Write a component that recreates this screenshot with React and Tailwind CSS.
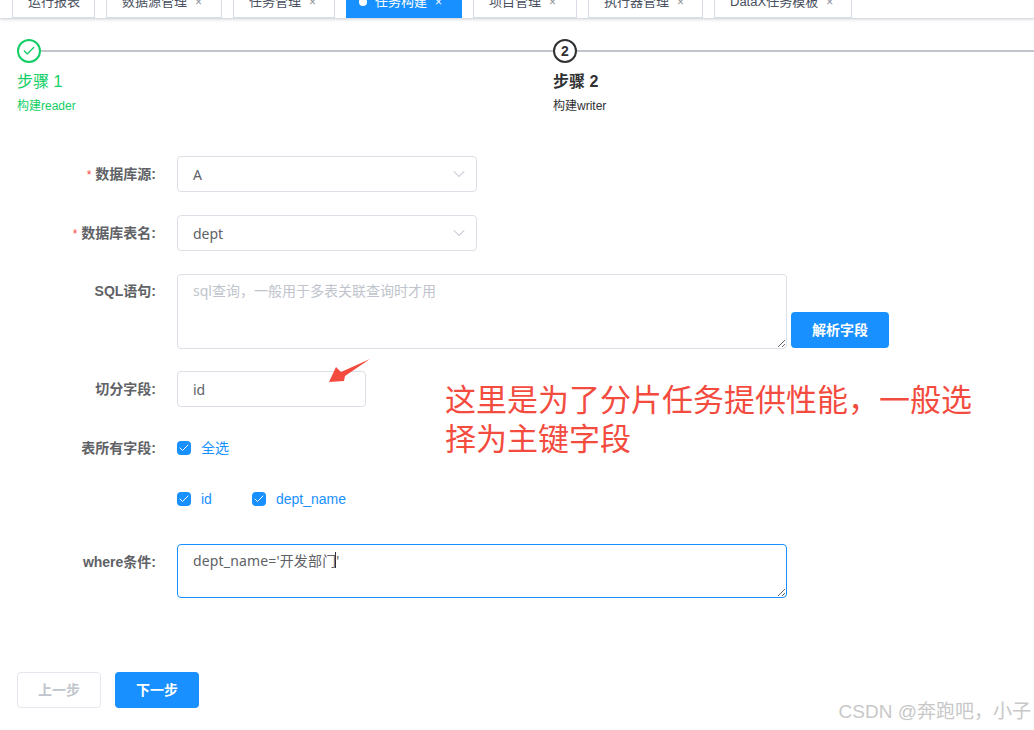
import React from "react";
import { ChevronDown, Check } from "lucide-react";

const tabs = [
  { name: "运行报表", w: "w-[83px]", closable: false },
  { name: "数据源管理", w: "w-[116px]", closable: true },
  { name: "任务管理", w: "w-[102px]", closable: true },
  { name: "任务构建", w: "w-[116px]", closable: true, active: true },
  { name: "项目管理", w: "w-[104px]", closable: true },
  { name: "执行器管理", w: "w-[115px]", closable: true },
  { name: "DataX任务模板", w: "w-[138px]", closable: true },
];

const sans = "font-['Noto_Sans','Noto_Sans_CJK_SC',sans-serif]";
const arial = "font-['Liberation_Sans','Noto_Sans_CJK_SC',sans-serif]";

function Label({ required, children }) {
  return (
    <div className={`w-[177px] shrink-0 pr-[21px] text-right text-sm font-bold text-[#606266] ${arial}`}>
      {required && <span className="mr-1 text-xs font-normal text-[#ff4949]">*</span>}
      {children}
    </div>
  );
}

function SelectBox({ value }) {
  return (
    <div className="flex h-9 w-[300px] items-center justify-between rounded border border-[#dcdfe6] pl-[15px] pr-[7px]">
      <span className={`pt-px text-sm text-[#606266] ${sans}`}>{value}</span>
      <ChevronDown className="h-5 w-5 text-[#c0c4cc]" strokeWidth={1.25} />
    </div>
  );
}

function CheckItem({ label, className }) {
  return (
    <div className={`flex items-center ${className || ""}`}>
      <span className="flex h-3.5 w-3.5 items-center justify-center rounded-sm bg-[#1890ff]">
        <Check className="h-3 w-3 text-white" strokeWidth={2} />
      </span>
      <span className={`ml-2.5 text-sm text-[#1890ff] ${arial}`}>{label}</span>
    </div>
  );
}

export default function App() {
  return (
    <div className={`relative h-[730px] w-[1034px] overflow-hidden bg-white ${arial}`}>
      {/* Tabs, cut off at the top of the shot */}
      <div className="flex h-[19px] items-end gap-[11px] overflow-hidden border-b border-[#d8dce5] pl-3 shadow-[0_1px_3px_rgba(0,0,0,0.12)]">
        {tabs.map((tab) => (
          <div
            key={tab.name}
            className={`flex h-8 shrink-0 items-center gap-2 border text-[13px] ${tab.w} ${
              tab.active
                ? "border-[#1890ff] bg-[#1890ff] pl-3 text-white"
                : "border-[#d8dce5] bg-white pl-[15px] text-[#495060]"
            }`}
          >
            {tab.active && <span className="h-2 w-2 rounded-full bg-white" />}
            <span>{tab.name}</span>
            {tab.closable && (
              <span className={`text-xs ${tab.active ? "text-white" : "text-[#8a8f99]"}`}>×</span>
            )}
          </div>
        ))}
      </div>

      {/* Steps */}
      <div className="mt-[20px] flex pl-[17px]">
        <div className="w-[536px] shrink-0">
          <div className="flex items-center">
            <span className="flex h-6 w-6 shrink-0 items-center justify-center rounded-full border-2 border-[#13ce66]">
              <Check className="h-3.5 w-3.5 text-[#13ce66]" strokeWidth={2.25} />
            </span>
            <div className="h-0.5 flex-1 bg-[#c0c4cc]" />
          </div>
          <div className="mt-[8px] text-base leading-[21px] text-[#13ce66]">步骤 1</div>
          <div className="mt-[4px] text-xs leading-5 text-[#13ce66]">构建reader</div>
        </div>
        <div className="flex-1">
          <div className="flex items-center">
            <span className="flex h-6 w-6 shrink-0 items-center justify-center rounded-full border-2 border-[#303133] text-sm font-bold text-[#303133]">
              2
            </span>
            <div className="h-0.5 flex-1 bg-[#c0c4cc]" />
          </div>
          <div className="mt-[8px] text-base font-bold leading-[21px] text-[#303133]">步骤 2</div>
          <div className="mt-[4px] text-xs leading-5 text-[#303133]">构建writer</div>
        </div>
      </div>

      {/* Form */}
      <div className="mt-[40px]">
        <div className="flex items-center">
          <Label required>数据库源:</Label>
          <SelectBox value="A" />
        </div>
        <div className="mt-[23px] flex items-center">
          <Label required>数据库表名:</Label>
          <SelectBox value="dept" />
        </div>
        <div className="mt-[23px] flex items-start">
          <div className="pt-[7px]">
            <Label>SQL语句:</Label>
          </div>
          <textarea
            readOnly
            placeholder="sql查询，一般用于多表关联查询时才用"
            className={`block h-[75px] w-[610px] rounded border border-[#dcdfe6] px-[15px] py-[5px] text-sm leading-[21px] text-[#606266] outline-none placeholder:text-[#c0c4cc] ${sans}`}
          />
          <button className="ml-1 mt-[38px] h-9 w-[98px] rounded bg-[#1890ff] text-sm font-bold text-white">
            解析字段
          </button>
        </div>
        <div className="mt-[22px] flex items-center">
          <Label>切分字段:</Label>
          <div className={`flex h-9 w-[189px] items-center rounded border border-[#dcdfe6] px-[15px] pt-px text-sm text-[#606266] ${sans}`}>
            id
          </div>
        </div>
        <div className="mt-[31px] flex h-[20px] items-center">
          <Label>表所有字段:</Label>
          <CheckItem label="全选" />
        </div>
        <div className="mt-[31px] flex h-[20px] items-center pl-[177px]">
          <CheckItem label="id" />
          <CheckItem label="dept_name" className="ml-10" />
        </div>
        <div className="relative mt-[35px] flex items-start">
          <div className="pt-2">
            <Label>where条件:</Label>
          </div>
          <textarea
            readOnly
            defaultValue="dept_name='开发部门'"
            className={`block h-[54px] w-[610px] rounded border border-[#1890ff] px-[15px] py-[5px] text-sm leading-[21px] tracking-[0.15px] text-[#606266] outline-none ${sans}`}
          />
          {/* text caret */}
          <span className="absolute left-[335px] top-[8px] h-4 w-px bg-[#303133]" />
        </div>
      </div>

      {/* Footer buttons */}
      <div className="mt-[74px] flex gap-[14px] pl-[17px]">
        <button className="h-9 w-[84px] rounded border border-[#e4e7ed] bg-white text-sm font-bold text-[#c0c4cc]">
          上一步
        </button>
        <button className="h-9 w-[84px] rounded bg-[#1890ff] text-sm font-bold text-white">
          下一步
        </button>
      </div>

      {/* Red annotation drawn over the shot */}
      <svg className="absolute left-[325px] top-[355px]" width="50" height="32" viewBox="325 355 50 32">
        <polygon points="329,382 336,367 341,372 370,359 345,376 344,381" fill="#f44b3f" />
      </svg>
      <div className={`absolute left-[445px] top-[380px] w-[540px] text-[31px] leading-[39px] text-[#f44b3f] ${sans}`}>
        这里是为了分片任务提供性能，一般选择为主键字段
      </div>

      {/* Watermark */}
      <div className={`absolute right-[3px] top-[700px] text-[19px] leading-6 text-[#c8c8c8] ${arial}`}>
        CSDN @奔跑吧，小子
      </div>
    </div>
  );
}
